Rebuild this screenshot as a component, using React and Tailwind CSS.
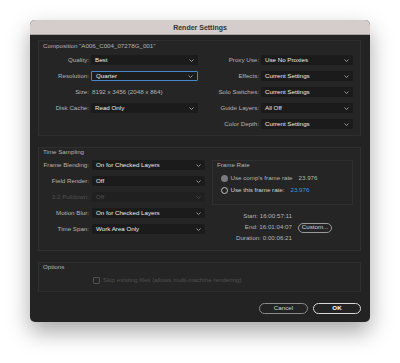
import React from "react";

const Chevron = ({ color = "#b0b0b0" }) => (
  <svg width="5" height="3" viewBox="0 0 5 3" fill="none">
    <path d="M0.5 0.5 L2.5 2.5 L4.5 0.5" stroke={color} strokeWidth="0.8" />
  </svg>
);

const Select = ({ value, width, focus, disabled }) => (
  <div
    className={`flex h-[10px] items-center justify-between rounded-[1px] pl-[4px] pr-[4px] ${
      focus ? "border border-[#4a86c7] bg-[#1c1c1c]" : disabled ? "bg-[#202020]" : "bg-[#1b1b1b]"
    }`}
    style={{ width }}
  >
    <span className={disabled ? "text-[#505050]" : "text-[#ececec]"}>{value}</span>
    <Chevron color={disabled ? "#505050" : "#b0b0b0"} />
  </div>
);

const Row = ({ label, value, labelW, selW, gap = 2, focus, disabled, plain }) => (
  <div className="flex h-[16px] items-center">
    <span
      className={`text-right ${disabled ? "text-[#505050]" : "text-[#b4b4b4]"}`}
      style={{ width: labelW, marginRight: gap }}
    >
      {label}
    </span>
    {plain ? (
      <span className="pl-[1px] text-[#b4b4b4]">{value}</span>
    ) : (
      <Select value={value} width={selW} focus={focus} disabled={disabled} />
    )}
  </div>
);

const Group = ({ height, children }) => (
  <div className="border border-[#2f2f2f] bg-[#252525]" style={{ height }}>
    {children}
  </div>
);

export default function App() {
  return (
    <div className="h-[363px] w-[400px] bg-white pl-[30px] pt-[20px] font-['Liberation_Sans',Arial,sans-serif] text-[6.2px] leading-none">
      <div className="h-[302px] w-[340px] overflow-hidden rounded-[5px] bg-[#232323] shadow-[0_10px_22px_rgba(0,0,0,0.35)]">
        {/* title bar */}
        <div className="flex h-[15px] items-center justify-center border-b border-[#a9a1a0] bg-[#d5cdcb] text-[7px] font-bold text-[#333]">
          Render Settings
        </div>

        <div className="pl-[8px] pr-[9px] pt-[5px]">
          {/* Composition */}
          <Group height={96}>
            <div className="flex h-[11px] items-center pl-[4px] text-[#b4b4b4]">
              Composition "A006_C004_07278G_001"
            </div>
            <div className="flex">
              <div className="flex flex-col">
                <Row label="Quality:" value="Best" labelW={50} selW={107} />
                <Row label="Resolution:" value="Quarter" labelW={50} selW={107} focus />
                <Row label="Size:" value="8192 x 3456 (2048 x 864)" labelW={50} plain />
                <Row label="Disk Cache:" value="Read Only" labelW={50} selW={107} />
              </div>
              <div className="ml-[2px] flex flex-col">
                <Row label="Proxy Use:" value="Use No Proxies" labelW={59} selW={92} />
                <Row label="Effects:" value="Current Settings" labelW={59} selW={92} />
                <Row label="Solo Switches:" value="Current Settings" labelW={59} selW={92} />
                <Row label="Guide Layers:" value="All Off" labelW={59} selW={92} />
                <Row label="Color Depth:" value="Current Settings" labelW={59} selW={92} />
              </div>
            </div>
          </Group>

          {/* Time Sampling */}
          <div className="mt-[11px]">
            <Group height={104}>
              <div className="flex h-[9px] items-center pl-[4px] text-[#b4b4b4]">Time Sampling</div>
              <div className="flex">
                <div className="flex flex-col">
                  <Row label="Frame Blending:" value="On for Checked Layers" labelW={50} selW={113} gap={3} />
                  <Row label="Field Render:" value="Off" labelW={50} selW={113} gap={3} />
                  <Row label="3:2 Pulldown:" value="Off" labelW={50} selW={113} gap={3} disabled />
                  <Row label="Motion Blur:" value="On for Checked Layers" labelW={50} selW={113} gap={3} />
                  <Row label="Time Span:" value="Work Area Only" labelW={50} selW={113} gap={3} />
                </div>
                <div className="ml-[7px] mt-[3px] flex flex-col">
                  <div className="h-[45px] w-[141px] border border-[#2f2f2f]">
                    <div className="flex h-[8px] items-center pl-[4px] text-[#b4b4b4]">Frame Rate</div>
                    <div className="mt-[3px] flex h-[12px] items-center pl-[8px]">
                      <span className="h-[7px] w-[7px] rounded-full bg-[#7a7a7a]" />
                      <span className="ml-[2.5px] text-[#b4b4b4]">Use comp's frame rate</span>
                      <span className="ml-[6px] text-[#b4b4b4]">23.976</span>
                    </div>
                    <div className="flex h-[12px] items-center pl-[8px]">
                      <span className="h-[7px] w-[7px] rounded-full border border-[#c4c4c4]" />
                      <span className="ml-[2.5px] text-[#d4d4d4]">Use this frame rate:</span>
                      <span className="ml-[6px] text-[#3b93e0]">23.976</span>
                    </div>
                  </div>
                  <div className="mt-[6px] flex h-[11px] items-center">
                    <span className="w-[80px] text-right text-[#b4b4b4]">Start: 16:00:57:11</span>
                  </div>
                  <div className="flex h-[11px] items-center">
                    <span className="w-[80px] text-right text-[#b4b4b4]">End: 16:01:04:07</span>
                    <span className="ml-[6px] flex h-[10px] w-[34px] items-center justify-center rounded-full border border-[#9a9a9a] text-[#d4d4d4]">
                      Custom...
                    </span>
                  </div>
                  <div className="flex h-[11px] items-center">
                    <span className="w-[80px] text-right text-[#b4b4b4]">Duration: 0:00:06:21</span>
                  </div>
                </div>
              </div>
            </Group>
          </div>

          {/* Options */}
          <div className="mt-[11px]">
            <Group height={30}>
              <div className="flex h-[9px] items-center pl-[4px] text-[#b4b4b4]">Options</div>
              <div className="mt-[2px] flex h-[12px] items-center pl-[54px]">
                <span className="h-[7px] w-[7px] rounded-[1px] border border-[#505050]" />
                <span className="ml-[3px] text-[#505050]">Skip existing files (allows multi-machine rendering)</span>
              </div>
            </Group>
          </div>

          {/* Buttons */}
          <div className="mt-[11px] flex h-[11px] justify-end gap-[5px]">
            <button className="flex h-[11px] w-[49px] items-center justify-center rounded-full border border-[#8a8a8a] text-[6.2px] text-[#d4d4d4]">
              Cancel
            </button>
            <button className="flex h-[11px] w-[48px] items-center justify-center rounded-full border-[1.5px] border-[#d8d8d8] text-[6.2px] font-bold text-white">
              OK
            </button>
          </div>
        </div>
      </div>
    </div>
  );
}
